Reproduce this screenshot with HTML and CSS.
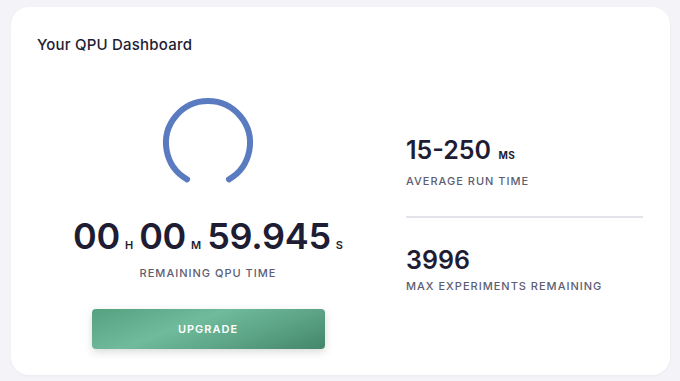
FILE: index.html
```html
<!DOCTYPE html>
<html lang="en">
<head>
  <meta charset="UTF-8">
  <meta name="viewport" content="width=device-width, initial-scale=1.0">
  <title>Your QPU Dashboard</title>
  <link rel="stylesheet" href="styles.css">
</head>
<body>
  <div class="card">
    <h2 class="card-title">Your QPU Dashboard</h2>
    <div class="card-body">
      <div class="timer-col">
        <svg class="ring" width="96" height="96" viewBox="0 0 96 96">
          <path d="M27 84.37 A42 42 0 1 1 69 84.37" fill="none" stroke="#5b7bc1" stroke-width="6" stroke-linecap="round"/>
        </svg>
        <div class="timer">
          <span class="num">00</span><span class="unit">H</span>
          <span class="num">00</span><span class="unit">M</span>
          <span class="num">59.945</span><span class="unit">S</span>
        </div>
        <p class="label">Remaining QPU Time</p>
        <button type="button" class="upgrade">Upgrade</button>
      </div>
      <div class="stats-col">
        <div class="stat">
          <div class="stat-value">15-250 <span class="stat-unit">MS</span></div>
          <p class="label">Average Run Time</p>
        </div>
        <div class="stat">
          <div class="stat-value">3996</div>
          <p class="label">Max Experiments Remaining</p>
        </div>
      </div>
    </div>
  </div>
</body>
</html>
```

FILE: styles.css
```css
body {
  font-family: Inter, "Noto Sans", sans-serif;
  margin: 0;
  padding: 7px 10px 6px 11px;
  background-color: #f3f3f8;
  color: #1e1d33;
}
.card {
  background-color: #fff;
  border-radius: 18px;
  height: 368px;
  box-sizing: border-box;
  padding: 29px 27px 0 26px;
  box-shadow: 0 1px 3px rgba(30, 30, 60, 0.04);
}
.card-title {
  margin: 0;
  font-size: 15px;
  font-weight: 500;
  line-height: 18px;
  letter-spacing: 0.2px;
}
.card-body {
  display: grid;
  grid-template-columns: 342px 1fr;
  gap: 27px;
}
.timer-col {
  display: flex;
  flex-direction: column;
  align-items: center;
  padding-top: 41px;
}
.ring {
  display: block;
}
.timer {
  margin-top: 27px;
  display: flex;
  align-items: baseline;
  line-height: 36px;
}
.num {
  font-size: 36px;
  font-weight: 600;
  letter-spacing: -0.3px;
}
.unit {
  font-size: 11px;
  font-weight: 600;
  margin: 0 6px 0 5px;
}
.unit:last-child {
  margin-right: 0;
}
.label {
  margin: 0;
  font-size: 11px;
  font-weight: 500;
  letter-spacing: 1px;
  text-transform: uppercase;
  color: #5d5d72;
}
.timer-col .label {
  margin-top: 3px;
}
.upgrade {
  margin-top: 29px;
  width: 233px;
  height: 40px;
  border: none;
  border-radius: 4px;
  background: linear-gradient(160deg, #54a07f 0%, #6fbb9c 40%, #5aa283 70%, #44866a 100%);
  box-shadow: 0 3px 8px rgba(40, 60, 50, 0.18);
  color: #fff;
  font-family: inherit;
  font-size: 11px;
  font-weight: 600;
  letter-spacing: 1px;
  text-transform: uppercase;
  cursor: pointer;
}
.stats-col {
  padding-top: 80px;
}
.stat {
  padding-bottom: 28px;
}
.stat + .stat {
  border-top: 2px solid #e3e3e9;
  padding-top: 26px;
}
.stat-value {
  font-size: 25px;
  font-weight: 600;
  line-height: 32px;
}
.stat-unit {
  font-size: 10px;
  font-weight: 700;
  letter-spacing: 0.5px;
  margin-left: 1px;
}
.stat .label {
  margin-top: 3px;
}
```
